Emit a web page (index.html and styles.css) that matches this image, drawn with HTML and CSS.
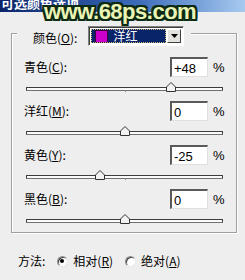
FILE: index.html
```html
<!DOCTYPE html>
<html lang="zh">
  <head>
    <meta charset="UTF-8" />
    <title>可选颜色选项</title>
    <link rel="stylesheet" href="styles.css">
  </head>
  <body>
    <div class="window">
      <div class="titlebar"><span class="title">可选颜色选项</span></div>
      <div class="watermark">www.68ps.com</div>

      <div class="group">
        <div class="group-head">
          <span class="label">颜色(<u>O</u>):</span>
          <div class="select">
            <div class="select-value"><span class="swatch"></span>洋红</div>
            <div class="select-btn">
              <svg width="7" height="4" viewBox="0 0 7 4"><path d="M0 0 H7 L3.5 4 Z" fill="#000"/></svg>
            </div>
          </div>
        </div>

        <div class="channels">
          <!-- 青色 -->
          <div class="channel">
            <div class="channel-row">
              <span class="label">青色(<u>C</u>):</span>
              <span class="field">+48</span>
              <span class="pct">%</span>
            </div>
            <div class="track">
              <span class="tick"></span>
              <svg class="thumb" style="left: 74%" width="10" height="10" viewBox="0 0 10 10"><path d="M0.5 9.5 V5 L5 0.5 L9.5 5 V9.5 Z" fill="#f2f2f2" stroke="#333"/></svg>
            </div>
          </div>

          <!-- 洋红 -->
          <div class="channel">
            <div class="channel-row">
              <span class="label">洋红(<u>M</u>):</span>
              <span class="field">0</span>
              <span class="pct">%</span>
            </div>
            <div class="track">
              <span class="tick"></span>
              <svg class="thumb" style="left: 50%" width="10" height="10" viewBox="0 0 10 10"><path d="M0.5 9.5 V5 L5 0.5 L9.5 5 V9.5 Z" fill="#f2f2f2" stroke="#333"/></svg>
            </div>
          </div>

          <!-- 黄色 -->
          <div class="channel">
            <div class="channel-row">
              <span class="label">黄色(<u>Y</u>):</span>
              <span class="field">-25</span>
              <span class="pct">%</span>
            </div>
            <div class="track">
              <span class="tick"></span>
              <svg class="thumb" style="left: 37.5%" width="10" height="10" viewBox="0 0 10 10"><path d="M0.5 9.5 V5 L5 0.5 L9.5 5 V9.5 Z" fill="#f2f2f2" stroke="#333"/></svg>
            </div>
          </div>

          <!-- 黑色 -->
          <div class="channel">
            <div class="channel-row">
              <span class="label">黑色(<u>B</u>):</span>
              <span class="field">0</span>
              <span class="pct">%</span>
            </div>
            <div class="track">
              <span class="tick"></span>
              <svg class="thumb" style="left: 50%" width="10" height="10" viewBox="0 0 10 10"><path d="M0.5 9.5 V5 L5 0.5 L9.5 5 V9.5 Z" fill="#f2f2f2" stroke="#333"/></svg>
            </div>
          </div>
        </div>
      </div>

      <div class="method">
        <span class="label">方法:</span>
        <span class="radio checked"></span>
        <span class="label">相对(<u>R</u>)</span>
        <span class="radio"></span>
        <span class="label">绝对(<u>A</u>)</span>
      </div>
    </div>
  </body>
</html>
```

FILE: styles.css
```css
body {
  margin: 0;
  padding: 0;
  background-color: #eeeeee;
  font-family: "Noto Sans CJK SC", "Liberation Sans", sans-serif;
  font-size: 12px;
  color: #000;
}

.window {
  position: relative;
  width: 245px;
  height: 280px;
  overflow: hidden;
  background-color: #eeeeee;
}

.titlebar {
  height: 12px;
  overflow: hidden;
  background: linear-gradient(to right, #0a246a, #3a6ab8 55%, #a6caf0);
}

.title {
  display: block;
  margin: -5px 0 0 1px;
  font-size: 13px;
  line-height: 16px;
  font-weight: bold;
  color: #fff;
}

.watermark {
  position: absolute;
  left: 44px;
  top: 1px;
  font-family: "Liberation Sans", Arial, sans-serif;
  font-size: 22px;
  line-height: 22px;
  letter-spacing: -0.5px;
  font-weight: bold;
  color: #eaf4b4;
  text-shadow:
    2px 0 0 #0d2a14, -2px 0 0 #0d2a14, 0 2px 0 #0d2a14, 0 -2px 0 #0d2a14,
    1px 1px 0 #0d2a14, -1px -1px 0 #0d2a14, 1px -1px 0 #0d2a14, -1px 1px 0 #0d2a14,
    2px 2px 0 #0d2a14, -2px 2px 0 #0d2a14, 2px -2px 0 #0d2a14, -2px -2px 0 #0d2a14;
}

.label {
  line-height: 16px;
  white-space: nowrap;
}

u {
  text-decoration: underline;
  text-underline-offset: 1px;
}

/* 分组框 */
.group {
  margin: 21px 8px 0 11px;
  height: 198px;
  border: 1px solid #a0a0a0;
  box-shadow: inset 1px 1px 0 #fff, 1px 1px 0 #fff;
}

.group-head {
  display: flex;
  align-items: flex-end;
  width: fit-content;
  margin: -8px 0 0 5px;
  padding: 0 7px 0 16px;
  background-color: #eeeeee;
}

.group-head .label {
  margin-right: 11px;
}

.select {
  display: flex;
  width: 96px;
  height: 20px;
  box-sizing: border-box;
  padding: 2px;
  background-color: #fff;
  border-top: 1px solid #808080;
  border-left: 1px solid #808080;
  border-right: 1px solid #fff;
  border-bottom: 1px solid #fff;
  box-shadow: inset 1px 1px 0 #404040;
}

.select-value {
  flex: 1;
  display: flex;
  align-items: center;
  gap: 5px;
  padding-left: 4px;
  background-color: #0a246a;
  outline: 1px dotted #c8b878;
  outline-offset: -1px;
  color: #fff;
  line-height: 14px;
}

.swatch {
  width: 11px;
  height: 11px;
  background-color: #cc00cc;
  border: 1px solid #40003c;
}

.select-btn {
  width: 14px;
  display: flex;
  align-items: center;
  justify-content: center;
  background-color: #e4e2dc;
  border-top: 1px solid #fff;
  border-left: 1px solid #fff;
  border-right: 1px solid #404040;
  border-bottom: 1px solid #404040;
  box-sizing: border-box;
  margin-left: 1px;
}

/* 通道滑块 */
.channels {
  margin-top: 11px;
  padding: 0 13px 0 14px;
}

.channel {
  margin-bottom: 10px;
}

.channel-row {
  display: flex;
  align-items: center;
  height: 20px;
  margin-left: -2px;
}

.channel-row .label {
  flex: 1;
}

.field {
  width: 38px;
  height: 20px;
  box-sizing: border-box;
  padding: 2px 0 0 2px;
  background-color: #fff;
  border-top: 2px solid #5a5a5a;
  border-left: 2px solid #5a5a5a;
  border-right: 1px solid #e0e0e0;
  border-bottom: 1px solid #e0e0e0;
  font-family: "Liberation Sans", Arial, sans-serif;
  font-size: 13px;
  line-height: 15px;
}

.pct {
  width: 10px;
  margin-left: 5px;
  font-family: "Liberation Sans", Arial, sans-serif;
  font-size: 13px;
}

.track {
  position: relative;
  height: 2px;
  margin-top: 10px;
  background-color: #fafafa;
  border: 1px solid #3c3c3c;
  border-bottom-color: #707070;
  border-radius: 1px;
}

.tick {
  position: absolute;
  left: 50%;
  top: 2px;
  width: 1px;
  height: 2px;
  background-color: #8a8a8a;
}

.thumb {
  position: absolute;
  top: -6px;
  margin-left: -5px;
}

/* 方法 */
.method {
  display: flex;
  align-items: center;
  margin: 20px 0 0 18px;
}

.radio {
  width: 11px;
  height: 11px;
  box-sizing: border-box;
  margin: 0 5px 0 12px;
  border-radius: 50%;
  background-color: #fff;
  border: 1px solid #8a8a8a;
  border-right-color: #e8e8e8;
  border-bottom-color: #e8e8e8;
  box-shadow: inset 1px 1px 0 #404040;
  position: relative;
}

.radio.checked::after {
  content: "";
  position: absolute;
  left: 2px;
  top: 2px;
  width: 4px;
  height: 4px;
  border-radius: 50%;
  background-color: #000;
}
```
